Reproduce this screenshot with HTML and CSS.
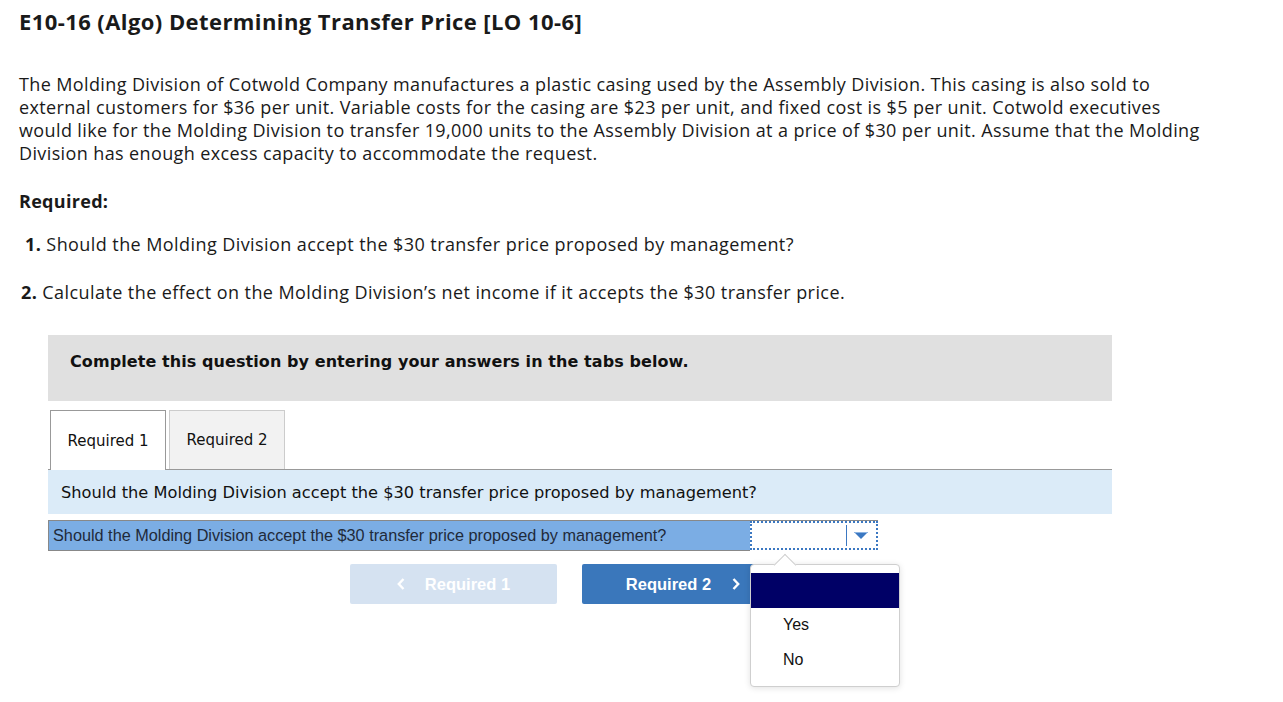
FILE: index.html
```html
<!DOCTYPE html>
<html>
<head>
<meta charset="utf-8">
<link rel="stylesheet" href="styles.css">
</head>
<body>
<div class="page">
  <h1 class="title">E10-16 (Algo) Determining Transfer Price [LO 10-6]</h1>
  <p class="intro">The Molding Division of Cotwold Company manufactures a plastic casing used by the Assembly Division. This casing is also sold to external customers for $36 per unit. Variable costs for the casing are $23 per unit, and fixed cost is $5 per unit. Cotwold executives would like for the Molding Division to transfer 19,000 units to the Assembly Division at a price of $30 per unit. Assume that the Molding Division has enough excess capacity to accommodate the request.</p>
  <p class="req-label">Required:</p>
  <p class="req-item one"><b>1.</b> Should the Molding Division accept the $30 transfer price proposed by management?</p>
  <p class="req-item two"><b>2.</b> Calculate the effect on the Molding Division’s net income if it accepts the $30 transfer price.</p>

  <div class="work">
    <div class="banner">Complete this question by entering your answers in the tabs below.</div>
    <div class="tabs">
      <div class="tab active">Required 1</div>
      <div class="tab">Required 2</div>
    </div>
    <div class="prompt">Should the Molding Division accept the $30 transfer price proposed by management?</div>
    <div class="answer-row">
      <div class="answer-label">Should the Molding Division accept the $30 transfer price proposed by management?</div>
      <div class="select-wrap">
        <div class="select">
          <span class="select-sep"></span>
          <svg class="select-arrow" width="14" height="7" viewBox="0 0 14 7"><path d="M0 0H14L7 7Z" fill="#3b78c2"/><path d="M0 0.5H14" stroke="#8db4e2" stroke-width="1"/></svg>
        </div>
        <div class="menu">
          <div class="menu-item selected"></div>
          <div class="menu-item">Yes</div>
          <div class="menu-item">No</div>
        </div>
      </div>
    </div>
    <div class="nav">
      <div class="btn disabled">
        <svg width="8" height="12" viewBox="0 0 8 12"><path d="M6.5 1L1.8 6l4.7 5" fill="none" stroke="#fff" stroke-width="2.4"/></svg>
        <span>Required 1</span>
      </div>
      <div class="btn primary">
        <span>Required 2</span>
        <svg width="8" height="12" viewBox="0 0 8 12"><path d="M1.5 1l4.7 5-4.7 5" fill="none" stroke="#fff" stroke-width="2.4"/></svg>
      </div>
    </div>
  </div>
</div>
</body>
</html>
```
FILE: styles.css
```css
* { box-sizing: border-box; }
html, body { margin: 0; padding: 0; background: #fff; }
body { font-family: "Open Sans", "Liberation Sans", sans-serif; color: #1a1a1a; }
.page { padding: 8px 19px 0 19px; min-height: 702px; }
.title { margin: 0; font-size: 22px; line-height: 26px; font-weight: 700; letter-spacing: 0.42px; color: #1a1a1a; }
.intro { margin: 39px 0 0 0; font-size: 18px; line-height: 23px; width: 1190px; letter-spacing: 0.38px; }
.req-label { margin: 25px 0 0 0; font-size: 18px; line-height: 23px; font-weight: 700; letter-spacing: 0.3px; }
.req-item { margin: 20px 0 0 0; font-size: 18px; line-height: 23px; letter-spacing: 0.42px; }
.req-item.one { padding-left: 6px; }
.req-item.two { margin-top: 25px; padding-left: 2px; }
.work { margin: 31px 0 0 29px; width: 1064px; }
.banner { background: #e0e0e0; height: 66px; padding: 16px 0 0 22px; font-family: "DejaVu Sans", Verdana, sans-serif; font-weight: 700; font-size: 16px; letter-spacing: 0.08px; line-height: 21px; color: #111; }
.tabs { display: flex; gap: 3px; margin-top: 9px; padding-left: 2px; border-bottom: 1px solid #999; height: 60px; }
.tab { width: 116px; height: 59px; border: 1px solid #ccc; border-bottom: none; background: #f2f2f2; font-family: "DejaVu Sans", Verdana, sans-serif; font-size: 15px; display: flex; align-items: center; justify-content: center; color: #111; }
.tab.active { height: 60px; background: #fff; border-color: #999; }
.prompt { background: #dbebf8; height: 44px; padding-left: 13px; display: flex; align-items: center; font-family: "DejaVu Sans", Verdana, sans-serif; font-size: 16.23px; color: #111; }
.answer-row { display: flex; margin-top: 6px; width: 830px; border-top: 1px solid #888; }
.answer-label { width: 702px; height: 30px; background: #7badE4; border-left: 1px solid #888; border-bottom: 1px solid #888; padding-left: 4px; font-family: "Liberation Sans", Arial, sans-serif; font-size: 16.25px; line-height: 29px; color: #1f2a3a; }
.select-wrap { position: relative; width: 128px; }
.select { height: 29px; border: 2px dotted #3b78c2; display: flex; align-items: center; justify-content: flex-end; padding-right: 8px; }
.select-sep { width: 1px; height: 21px; background: #3b78c2; margin-right: 7px; }
.select-arrow { display: block; }
.menu { position: absolute; left: 0; top: 43px; width: 150px; background: #fff; border: 1px solid #cfcfcf; border-radius: 4px; box-shadow: 0 1px 6px rgba(0,0,0,0.12); padding: 8px 0; font-family: "Liberation Sans", Arial, sans-serif; font-size: 16px; color: #111; z-index: 5; }
.menu::before { content: ""; position: absolute; left: 26px; top: -8px; width: 15px; height: 15px; background: #fff; border-left: 1px solid #cfcfcf; border-top: 1px solid #cfcfcf; transform: rotate(45deg); }
.menu-item { height: 35px; line-height: 34px; padding-left: 32px; position: relative; }
.menu-item.selected { background: #000066; }
.nav { display: flex; gap: 25px; margin: 13px 0 0 302px; }
.btn { width: 207px; height: 40px; border-radius: 2px; display: flex; align-items: center; justify-content: center; gap: 20px; font-family: "Liberation Sans", Arial, sans-serif; font-weight: 700; font-size: 16.5px; color: #fff; }
.btn.disabled { background: #d5e2f1; }
.btn.primary { background: #3a77bb; gap: 21px; padding-right: 5px; }
.btn svg { display: block; }
```
